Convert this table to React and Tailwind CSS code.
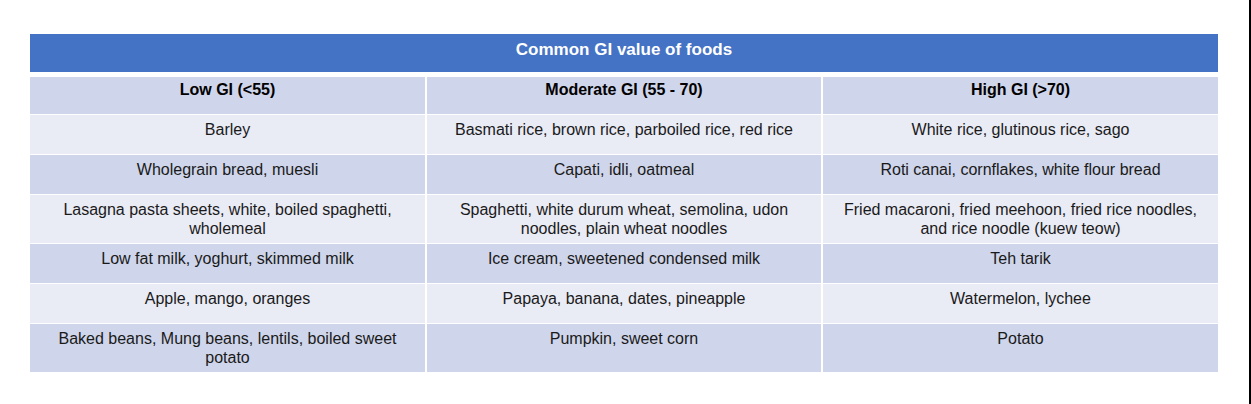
export default function App() {
  const rows = [
    { h: "h-[40px]", bg: "bg-[#E9EBF5]", c: ["Barley", "Basmati rice, brown rice, parboiled rice, red rice", "White rice, glutinous rice, sago"] },
    { h: "h-[40px]", bg: "bg-[#CFD5EA]", c: ["Wholegrain bread, muesli", "Capati, idli, oatmeal", "Roti canai, cornflakes, white flour bread"] },
    { h: "h-[49px]", bg: "bg-[#E9EBF5]", c: ["Lasagna pasta sheets, white, boiled spaghetti, wholemeal", "Spaghetti, white durum wheat, semolina, udon noodles, plain wheat noodles", "Fried macaroni, fried meehoon, fried rice noodles, and rice noodle (kuew teow)"] },
    { h: "h-[40px]", bg: "bg-[#CFD5EA]", c: ["Low fat milk, yoghurt, skimmed milk", "Ice cream, sweetened condensed milk", "Teh tarik"] },
    { h: "h-[40px]", bg: "bg-[#E9EBF5]", c: ["Apple, mango, oranges", "Papaya, banana, dates, pineapple", "Watermelon, lychee"] },
    { h: "h-[49px]", bg: "bg-[#CFD5EA]", c: ["Baked beans, Mung beans, lentils, boiled sweet potato", "Pumpkin, sweet corn", "Potato"] },
  ];
  return (
    <div
      className="w-[1251px] h-[404px] bg-white border-r-2 border-black pt-[34px] pl-[30px] text-[#1a1a1a]"
      style={{ fontFamily: '"Liberation Sans", Arial, sans-serif' }}
    >
      <div className="w-[1188px] bg-white">
        <div className="h-[38px] bg-[#4472C4] text-white font-bold text-[17px] leading-[19px] text-center pt-[6px]">
          Common GI value of foods
        </div>
        <div className="mt-[5px] h-[37px] grid grid-cols-[395px_394px_395px] gap-x-[2px]">
          {["Low GI (<55)", "Moderate GI (55 - 70)", "High GI (>70)"].map((t) => (
            <div key={t} className="bg-[#CFD5EA] font-bold text-[16px] leading-[19px] text-center pt-[3px] text-black">
              {t}
            </div>
          ))}
        </div>
        {rows.map((r, i) => (
          <div key={i} className={`${r.h} pt-px grid grid-cols-[395px_394px_395px] gap-x-[2px]`}>
            {r.c.map((t, j) => (
              <div key={j} className={`${r.bg} text-[16px] leading-[18.5px] text-center px-3 pt-[6px]`}>
                {t}
              </div>
            ))}
          </div>
        ))}
      </div>
    </div>
  );
}
